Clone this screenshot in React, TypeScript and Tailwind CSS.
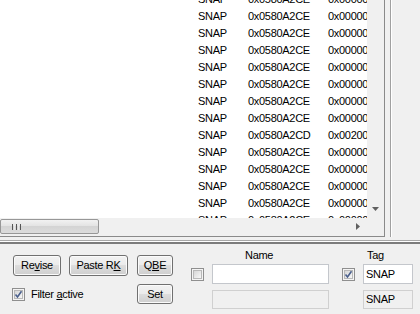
import React from 'react'

const rows = Array.from({ length: 15 }, (_, i) =>
  i === 8 ? ['0x0580A2CD', '0x00200000'] : ['0x0580A2CE', '0x00000000']
)

function Check({ checked }: { checked?: boolean }) {
  return (
    <span className="flex h-[13px] w-[13px] items-center justify-center border border-[#8f8f8f] bg-[#f4f4f4]">
      <span className="relative h-[9px] w-[9px] border border-[#b8b8b8] bg-[linear-gradient(135deg,#d6d6d6,#f7f7f7)]">
        {checked && (
          <svg viewBox="0 0 9 9" className="absolute -left-px -top-px h-[9px] w-[9px]">
            <path d="M1.5 4.5 L3.5 7 L7.5 1.2" fill="none" stroke="#4a5f8c" strokeWidth="1.6" />
          </svg>
        )}
      </span>
    </span>
  )
}

function Btn({ className, children }: { className: string; children: React.ReactNode }) {
  return (
    <div
      className={
        'flex items-center justify-center rounded-[3px] border border-[#707070] bg-[linear-gradient(#f2f2f2,#ebebeb_50%,#dddddd_50%,#cfcfcf)] text-black shadow-[inset_0_0_0_1px_#fbfbfb] ' +
        className
      }
    >
      <span>{children}</span>
    </div>
  )
}

export default function App() {
  return (
    <div className="h-[314px] w-[420px] overflow-hidden bg-[#f0f0f0] font-['Liberation_Sans',Arial,sans-serif] text-[11px] tracking-[-0.3px] text-black">
      {/* top: list view + side panel */}
      <div className="flex h-[237px]">
        <div className="flex w-[385px] flex-col border-r border-b border-[#8a8a8a]">
          <div className="flex h-[218px]">
            <div className="w-[367px] overflow-hidden bg-white">
              <div className="-mt-[9px]">
                {rows.map(([a, b], i) => (
                  <div key={i} className="flex h-[17px] items-center whitespace-nowrap">
                    <span className="ml-[198px] w-[50px] shrink-0">SNAP</span>
                    <span className="w-[80px] shrink-0">{a}</span>
                    <span className="shrink-0">{b}</span>
                  </div>
                ))}
              </div>
            </div>
            <div className="flex w-[17px] flex-col items-center justify-end bg-[#f0f0f0] pb-[7px]">
              <svg width="7" height="4" viewBox="0 0 7 4">
                <path d="M0 0 H7 L3.5 4 Z" fill="#606060" />
              </svg>
            </div>
          </div>
          <div className="flex h-[17px] bg-[#f0f0f0]">
            <div className="flex w-[367px] items-start">
              <div className="mt-px flex h-[15px] w-[99px] items-center rounded-[2px] border border-[#979797] bg-[linear-gradient(#f2f2f2,#e2e2e2_50%,#d4d4d4_50%,#dcdcdc)] pl-[11px]">
                <div className="flex gap-[1px]">
                  <span className="h-[6px] w-px bg-[#555]" />
                  <span className="h-[6px] w-px bg-[#e8e8e8]" />
                  <span className="h-[6px] w-px bg-[#555]" />
                  <span className="h-[6px] w-px bg-[#e8e8e8]" />
                  <span className="h-[6px] w-px bg-[#555]" />
                </div>
              </div>
              <div className="flex h-full flex-1 items-center justify-end pr-[7px]">
                <svg width="4" height="7" viewBox="0 0 4 7">
                  <path d="M0 0 V7 L4 3.5 Z" fill="#606060" />
                </svg>
              </div>
            </div>
            <div className="flex-1 bg-[#f0f0f0]" />
          </div>
        </div>
        <div className="w-[5px]" />
        <div className="flex-1 border-l border-[#a0a0a0] shadow-[inset_1px_0_0_#ffffff]" />
      </div>

      {/* splitter */}
      <div className="h-[3px]" />
      <div className="h-px bg-[#a8a8a8]" />
      <div className="h-px bg-white" />
      <div className="h-[2px] bg-[#7c7c7c]" />

      {/* bottom panel */}
      <div className="flex h-[70px]">
        <div className="w-[186px] pl-[13px] pt-[11px]">
          <div className="flex">
            <Btn className="h-[21px] w-[48px]">
              Re<u>v</u>ise
            </Btn>
            <Btn className="ml-[8px] h-[21px] w-[59px]">
              Paste R<u>K</u>
            </Btn>
            <Btn className="ml-[9px] h-[21px] w-[36px]">
              Q<u>B</u>E
            </Btn>
          </div>
          <div className="mt-[8px] flex items-center">
            <div className="-ml-px flex w-[125px] items-center">
              <Check checked />
              <span className="ml-[6px]">
                Filter <u>a</u>ctive
              </span>
            </div>
            <Btn className="h-[20px] w-[36px]">Set</Btn>
          </div>
        </div>

        <div className="flex pt-[5px]">
          <div className="w-[26px] pl-[5px] pt-[19px]">
            <Check />
          </div>
          <div className="w-[117px]">
            <div className="ml-[33px] h-[15px] leading-[13px]">Name</div>
            <div className="h-[20px] border border-[#c4c7cc] bg-white" />
            <div className="mt-[6px] h-[19px] border border-[#d0d0d0] bg-[#f0f0f0]" />
          </div>
          <div className="w-[34px] pl-[13px] pt-[19px]">
            <Check checked />
          </div>
          <div className="w-[50px]">
            <div className="ml-[4px] h-[15px] leading-[13px]">Tag</div>
            <div className="flex h-[20px] items-center border border-[#c4c7cc] bg-white pl-[2px]">SNAP</div>
            <div className="mt-[6px] flex h-[19px] items-center border border-[#d0d0d0] bg-[#f0f0f0] pl-[2px]">
              SNAP
            </div>
          </div>
        </div>
      </div>
    </div>
  )
}
